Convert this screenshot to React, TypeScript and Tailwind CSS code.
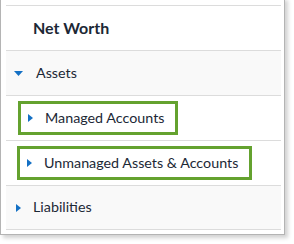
import React from "react";

function CaretDown() {
  return (
    <svg width="9" height="5" viewBox="0 0 9 5" className="shrink-0">
      <path d="M0 0 H9 L4.5 5 Z" fill="#1470c4" />
    </svg>
  );
}

function CaretRight() {
  return (
    <svg width="5" height="8" viewBox="0 0 5 8" className="shrink-0">
      <path d="M0 0 L5 4 L0 8 Z" fill="#1470c4" />
    </svg>
  );
}

function Highlight({ label }: { label: string }) {
  return (
    <div className="flex h-[34px] items-center gap-[12px] border-[3px] border-[#64a22f] pl-[7px] pr-[11px]">
      <CaretRight />
      <span className="text-[14.3px] leading-none text-[#1c2836]">{label}</span>
    </div>
  );
}

export default function App() {
  return (
    <div className="h-[244px] w-[294px] overflow-hidden bg-white font-['Lato',sans-serif]">
      <div className="-mt-[3px] w-[285px] border border-[#b4b4b4] bg-white pb-[4px] pl-[5px] pr-[2px] pt-[7px] shadow-[3px_3px_4px_rgba(0,0,0,0.18)]">
        <div className="w-[275px] border-t border-[#dcdcdc]">
          <div className="flex h-[45px] items-center border-b border-[#dcdcdc] pl-[27px]">
            <span className="text-[16px] font-bold leading-none text-[#1c2836]">Net Worth</span>
          </div>
          <div className="flex h-[45px] items-center gap-[13px] border-b border-[#dcdcdc] bg-[#f9f9f9] pl-[8px]">
            <CaretDown />
            <span className="text-[14.3px] leading-none text-[#1c2836]">Assets</span>
          </div>
          <div className="flex h-[45px] items-center border-b border-[#dcdcdc] pl-[12px]">
            <Highlight label="Managed Accounts" />
          </div>
          <div className="flex h-[45px] items-center border-b border-[#dcdcdc] pl-[11px]">
            <Highlight label="Unmanaged Assets & Accounts" />
          </div>
          <div className="flex h-[44px] items-center gap-[12px] border-b border-[#dcdcdc] bg-[#f9f9f9] pl-[10px]">
            <CaretRight />
            <span className="text-[14.3px] leading-none text-[#1c2836]">Liabilities</span>
          </div>
        </div>
      </div>
    </div>
  );
}
